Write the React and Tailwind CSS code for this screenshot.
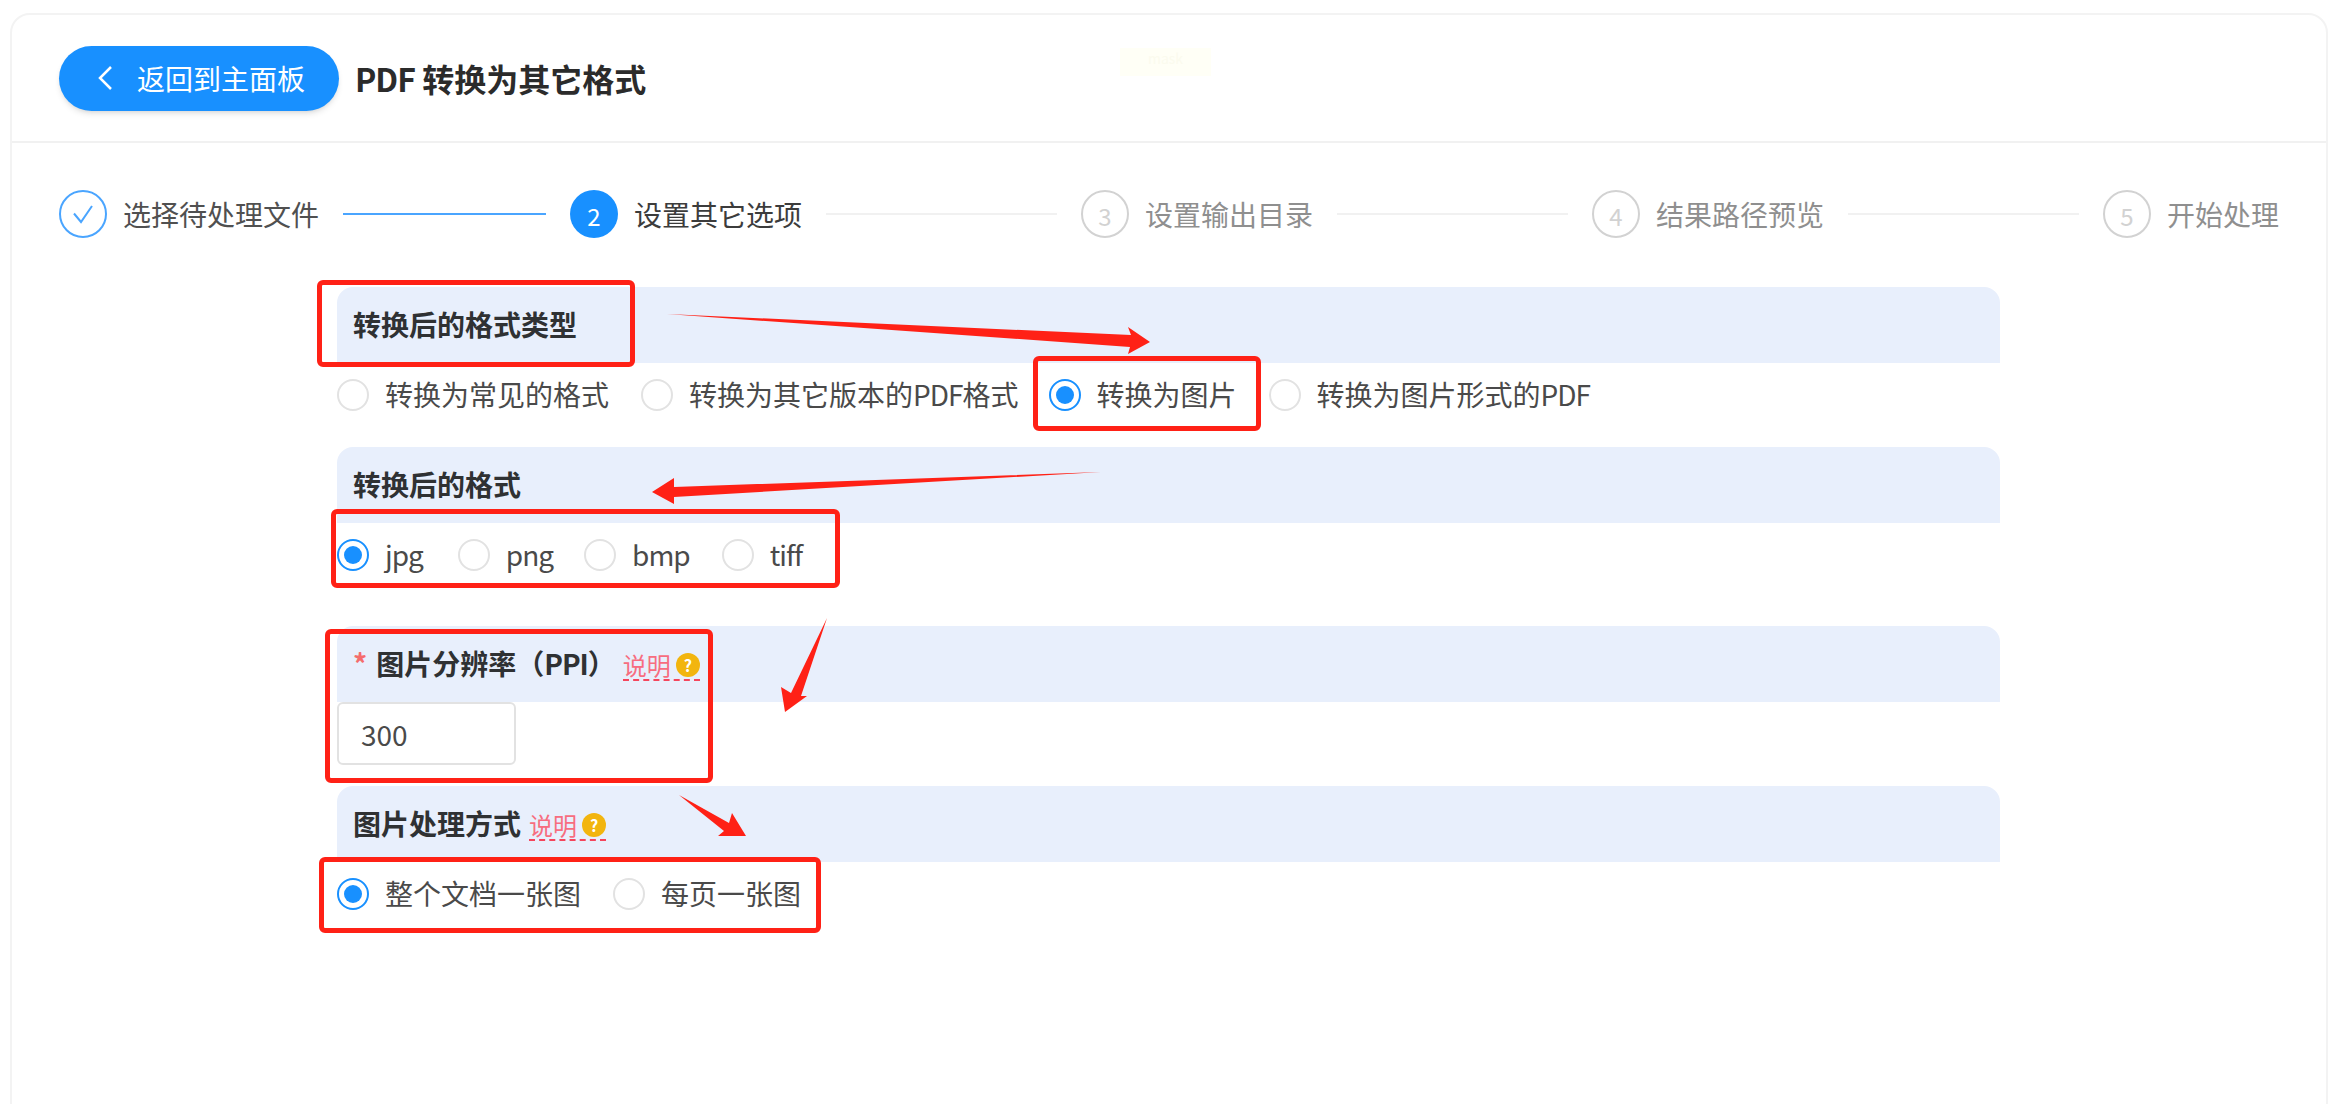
const Tight = ({ children }) => <span className="tracking-[-1px]">{children}</span>;

const Radio = ({ label, checked, mr = "mr-8" }) => (
  <div className={`flex items-center h-8 ${mr}`}>
    <span className={`flex items-center justify-center w-8 h-8 rounded-full border-2 bg-white shrink-0 ${checked ? "border-[#1890ff]" : "border-[#e2e2e2]"}`}>
      {checked && <span className="w-[18px] h-[18px] rounded-full bg-[#1890ff]" />}
    </span>
    <span className="ml-4 -mt-[2px] text-[28px] leading-8 text-[#4a4a4a] whitespace-nowrap">{label}</span>
  </div>
);

const Section = ({ children }) => (
  <div className="flex items-center h-[76px] pl-4 pb-[3px] rounded-t-2xl bg-[#e8effc] text-[28px] font-bold text-[#2f3133]">
    {children}
  </div>
);

const Help = () => (
  <span className="flex items-center h-[31px] mt-[6px] border-b-2 border-dashed border-[#f5455c] text-[24px] leading-7 font-normal text-[#f76d80]">
    说明
    <span className="ml-[5px] flex items-center justify-center w-6 h-6 rounded-full bg-[#f2b50f] text-white text-[16px] font-bold">?</span>
  </span>
);

const Step = ({ n, label, state, last }) => {
  const circle =
    state === "done"
      ? "border-2 border-[#4aa5ff]"
      : state === "active"
      ? "bg-[#1890ff] text-white"
      : "border-2 border-[#d2d2d2] text-[#d2d2d2]";
  const text = state === "done" ? "text-[#505050]" : state === "active" ? "text-[#3c3c3c]" : "text-[#8f8f8f]";
  return (
    <div className={`flex items-center h-12 ${last ? "" : "w-[511px]"}`}>
      <span className={`flex items-center justify-center w-12 h-12 rounded-full shrink-0 text-[24px] ${circle}`}>
        {state === "done" ? (
          <svg width="24" height="24" viewBox="0 0 24 24" fill="none" stroke="#4aa5ff" strokeWidth="2">
            <path d="M3 11.5 L10 20 L21 4" />
          </svg>
        ) : (
          <span className="mt-1">{n}</span>
        )}
      </span>
      <span className={`ml-4 text-[28px] leading-8 whitespace-nowrap ${text}`}>{label}</span>
      {!last && <span className={`flex-1 h-[2px] mx-6 ${state === "done" ? "bg-[#4aa5ff]" : "bg-[#f1f1f1]"}`} />}
    </div>
  );
};

const Box = ({ className }) => (
  <div className={`absolute border-[5px] border-[#ff2116] rounded-md ${className}`} />
);

export default function App() {
  return (
    <div className="relative h-[1104px] overflow-hidden bg-white pt-[13px] pl-[10px] pr-[2px] font-['Noto_Sans_CJK_SC','Noto_Sans',sans-serif]">
      <div className="h-[1120px] rounded-t-[20px] border-2 border-[#f3f3f3] bg-white">
        <div className="flex items-center h-[128px] pl-[47px] border-b-2 border-[#f1f1f1]">
          <button className="flex items-center w-[280px] h-[65px] pl-[36px] rounded-full bg-[#1890ff] shadow-md text-white text-[28px]">
            <svg width="22" height="28" viewBox="0 0 22 28" fill="none" stroke="white" strokeWidth="2.5">
              <path d="M16 3 L5 14 L16 25" />
            </svg>
            <span className="ml-5 whitespace-nowrap">返回到主面板</span>
          </button>
          <h1 className="ml-4 text-[32px] font-bold text-[#2b2b2b] whitespace-nowrap"><Tight>PDF</Tight> 转换为其它格式</h1>
        </div>

        <div className="flex items-center mt-[47px] pl-[47px]">
          <Step n="1" label="选择待处理文件" state="done" />
          <Step n="2" label="设置其它选项" state="active" />
          <Step n="3" label="设置输出目录" />
          <Step n="4" label="结果路径预览" />
          <Step n="5" label="开始处理" last />
        </div>

        <div className="w-[1663px] ml-[325px] mt-[49px]">
          <Section>转换后的格式类型</Section>
          <div className="flex mt-4">
            <Radio label="转换为常见的格式" />
            <Radio label={<>转换为其它版本的<Tight>PDF</Tight>格式</>} mr="mr-[30px]" />
            <Radio label="转换为图片" checked />
            <Radio label={<>转换为图片形式的<Tight>PDF</Tight></>} />
          </div>

          <div className="mt-9">
            <Section>转换后的格式</Section>
          </div>
          <div className="flex mt-4">
            <Radio label={<Tight>jpg</Tight>} checked mr="mr-[35px]" />
            <Radio label={<Tight>png</Tight>} mr="mr-[31px]" />
            <Radio label={<Tight>bmp</Tight>} />
            <Radio label={<Tight>tiff</Tight>} />
          </div>

          <div className="mt-[55px]">
            <Section>
              <span className="text-[#f56c6c] mr-[9px]">*</span>
              图片分辨率（<Tight>PPI</Tight>）
              <span className="ml-[7px]"><Help /></span>
            </Section>
          </div>
          <div className="flex items-center w-[179px] h-[63px] pl-[22px] border-2 border-[#e2e2e2] rounded-md bg-white text-[28px] text-[#4a4a4a]">
            300
          </div>

          <div className="mt-[21px]">
            <Section>
              图片处理方式
              <span className="ml-2"><Help /></span>
            </Section>
          </div>
          <div className="flex mt-4">
            <Radio label="整个文档一张图" checked />
            <Radio label="每页一张图" />
          </div>
        </div>
      </div>

      {/* faint watermark */}
      <div className="absolute left-[1120px] top-[48px] w-[91px] h-[28px] bg-[#fffff6] text-[#fbfbee] text-[14px] text-center">mask</div>

      {/* red annotations */}
      <Box className="left-[317px] top-[280px] w-[318px] h-[87px]" />
      <Box className="left-[1033px] top-[356px] w-[228px] h-[75px]" />
      <Box className="left-[331px] top-[509px] w-[509px] h-[79px]" />
      <Box className="left-[325px] top-[629px] w-[388px] h-[154px]" />
      <Box className="left-[319px] top-[857px] w-[502px] h-[76px]" />

      <svg className="absolute left-0 top-0 pointer-events-none" width="2330" height="1104" fill="#ff2116">
        <polygon points="667,314 1131,335 1128,327 1150,342 1128,354 1130,347" />
        <polygon points="1101,472 674,487 674,478 652,492 674,504 674,497" />
        <polygon points="827,618 801,696 807,696 785,712 781,687 791,693" />
        <polygon points="679,795 729,823 732,813 746,836 718,836 724,831" />
      </svg>
    </div>
  );
}
